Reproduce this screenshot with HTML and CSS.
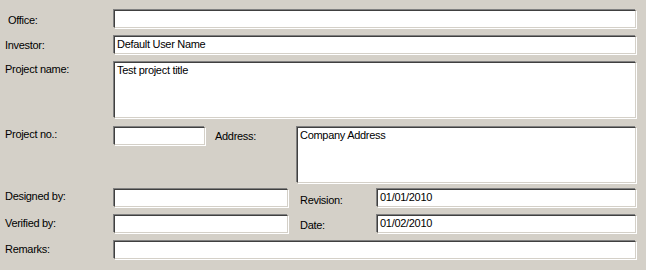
FILE: index.html
```html
<!DOCTYPE html>
<html>
<head>
    <title>Project properties</title>
    <link rel="stylesheet" href="styles.css">
</head>
<body>
    <div class="form">
        <div class="row">
            <label class="label label-office">Office:</label>
            <div class="field grow"></div>
        </div>

        <div class="row row-investor">
            <label class="label label-investor">Investor:</label>
            <div class="field grow">Default User Name</div>
        </div>

        <div class="row row-name">
            <label class="label label-name">Project name:</label>
            <div class="field grow tall">Test project title</div>
        </div>

        <div class="row row-number">
            <label class="label label-number">Project no.:</label>
            <div class="field short"></div>
            <label class="label label-address">Address:</label>
            <div class="field grow tall">Company Address</div>
        </div>

        <div class="row row-designed">
            <label class="label label-designed">Designed by:</label>
            <div class="field medium"></div>
            <label class="label label-side label-revision">Revision:</label>
            <div class="field grow">01/01/2010</div>
        </div>

        <div class="row row-verified">
            <label class="label label-verified">Verified by:</label>
            <div class="field medium"></div>
            <label class="label label-side label-date">Date:</label>
            <div class="field grow">01/02/2010</div>
        </div>

        <div class="row row-remarks">
            <label class="label label-remarks">Remarks:</label>
            <div class="field grow"></div>
        </div>
    </div>
</body>
</html>
```

FILE: styles.css
```css
body {
    margin: 0;
    background: #d4d0c8;
    font-family: 'Liberation Sans', Arial, sans-serif;
    font-size: 11px;
    line-height: 13px;
    letter-spacing: -0.3px;
    color: #000;
}

.form {
    padding: 9px 9px 0 5px;
}

.row {
    display: flex;
    align-items: flex-start;
}

.row-investor,
.row-name,
.row-verified,
.row-remarks {
    margin-top: 6px;
}

.row-number {
    margin-top: 7px;
}

.row-designed {
    margin-top: 4px;
}

.label {
    width: 108px;
    flex: none;
}

.label-office {
    width: 105px;
    padding: 5px 0 0 3px;
}

.label-investor {
    padding-top: 4px;
}

.label-name {
    padding-top: 2px;
}

.label-number {
    padding-top: 2px;
}

.label-address {
    width: 81px;
    padding: 4px 0 0 9px;
}

.label-designed {
    padding-top: 2px;
}

.label-verified {
    padding-top: 3px;
}

.label-remarks {
    padding-top: 3px;
}

.label-side {
    width: 76px;
    padding-left: 11px;
}

.label-revision {
    padding-top: 6px;
}

.label-date {
    padding-top: 5px;
}

/* sunken edit box: dark inner edge, grey outer edge */
.field {
    box-sizing: border-box;
    height: 18px;
    margin: 1px;
    padding: 1px 2px 0;
    background: #fff;
    border: 1px solid;
    border-color: #404040 #d4d0c8 #d4d0c8 #404040;
    box-shadow: -1px -1px 0 #808080, 1px 1px 0 #fff;
    white-space: nowrap;
}

.grow {
    flex: 1;
}

.tall {
    height: 56px;
}

.short {
    width: 91px;
}

.medium {
    width: 174px;
}
```
